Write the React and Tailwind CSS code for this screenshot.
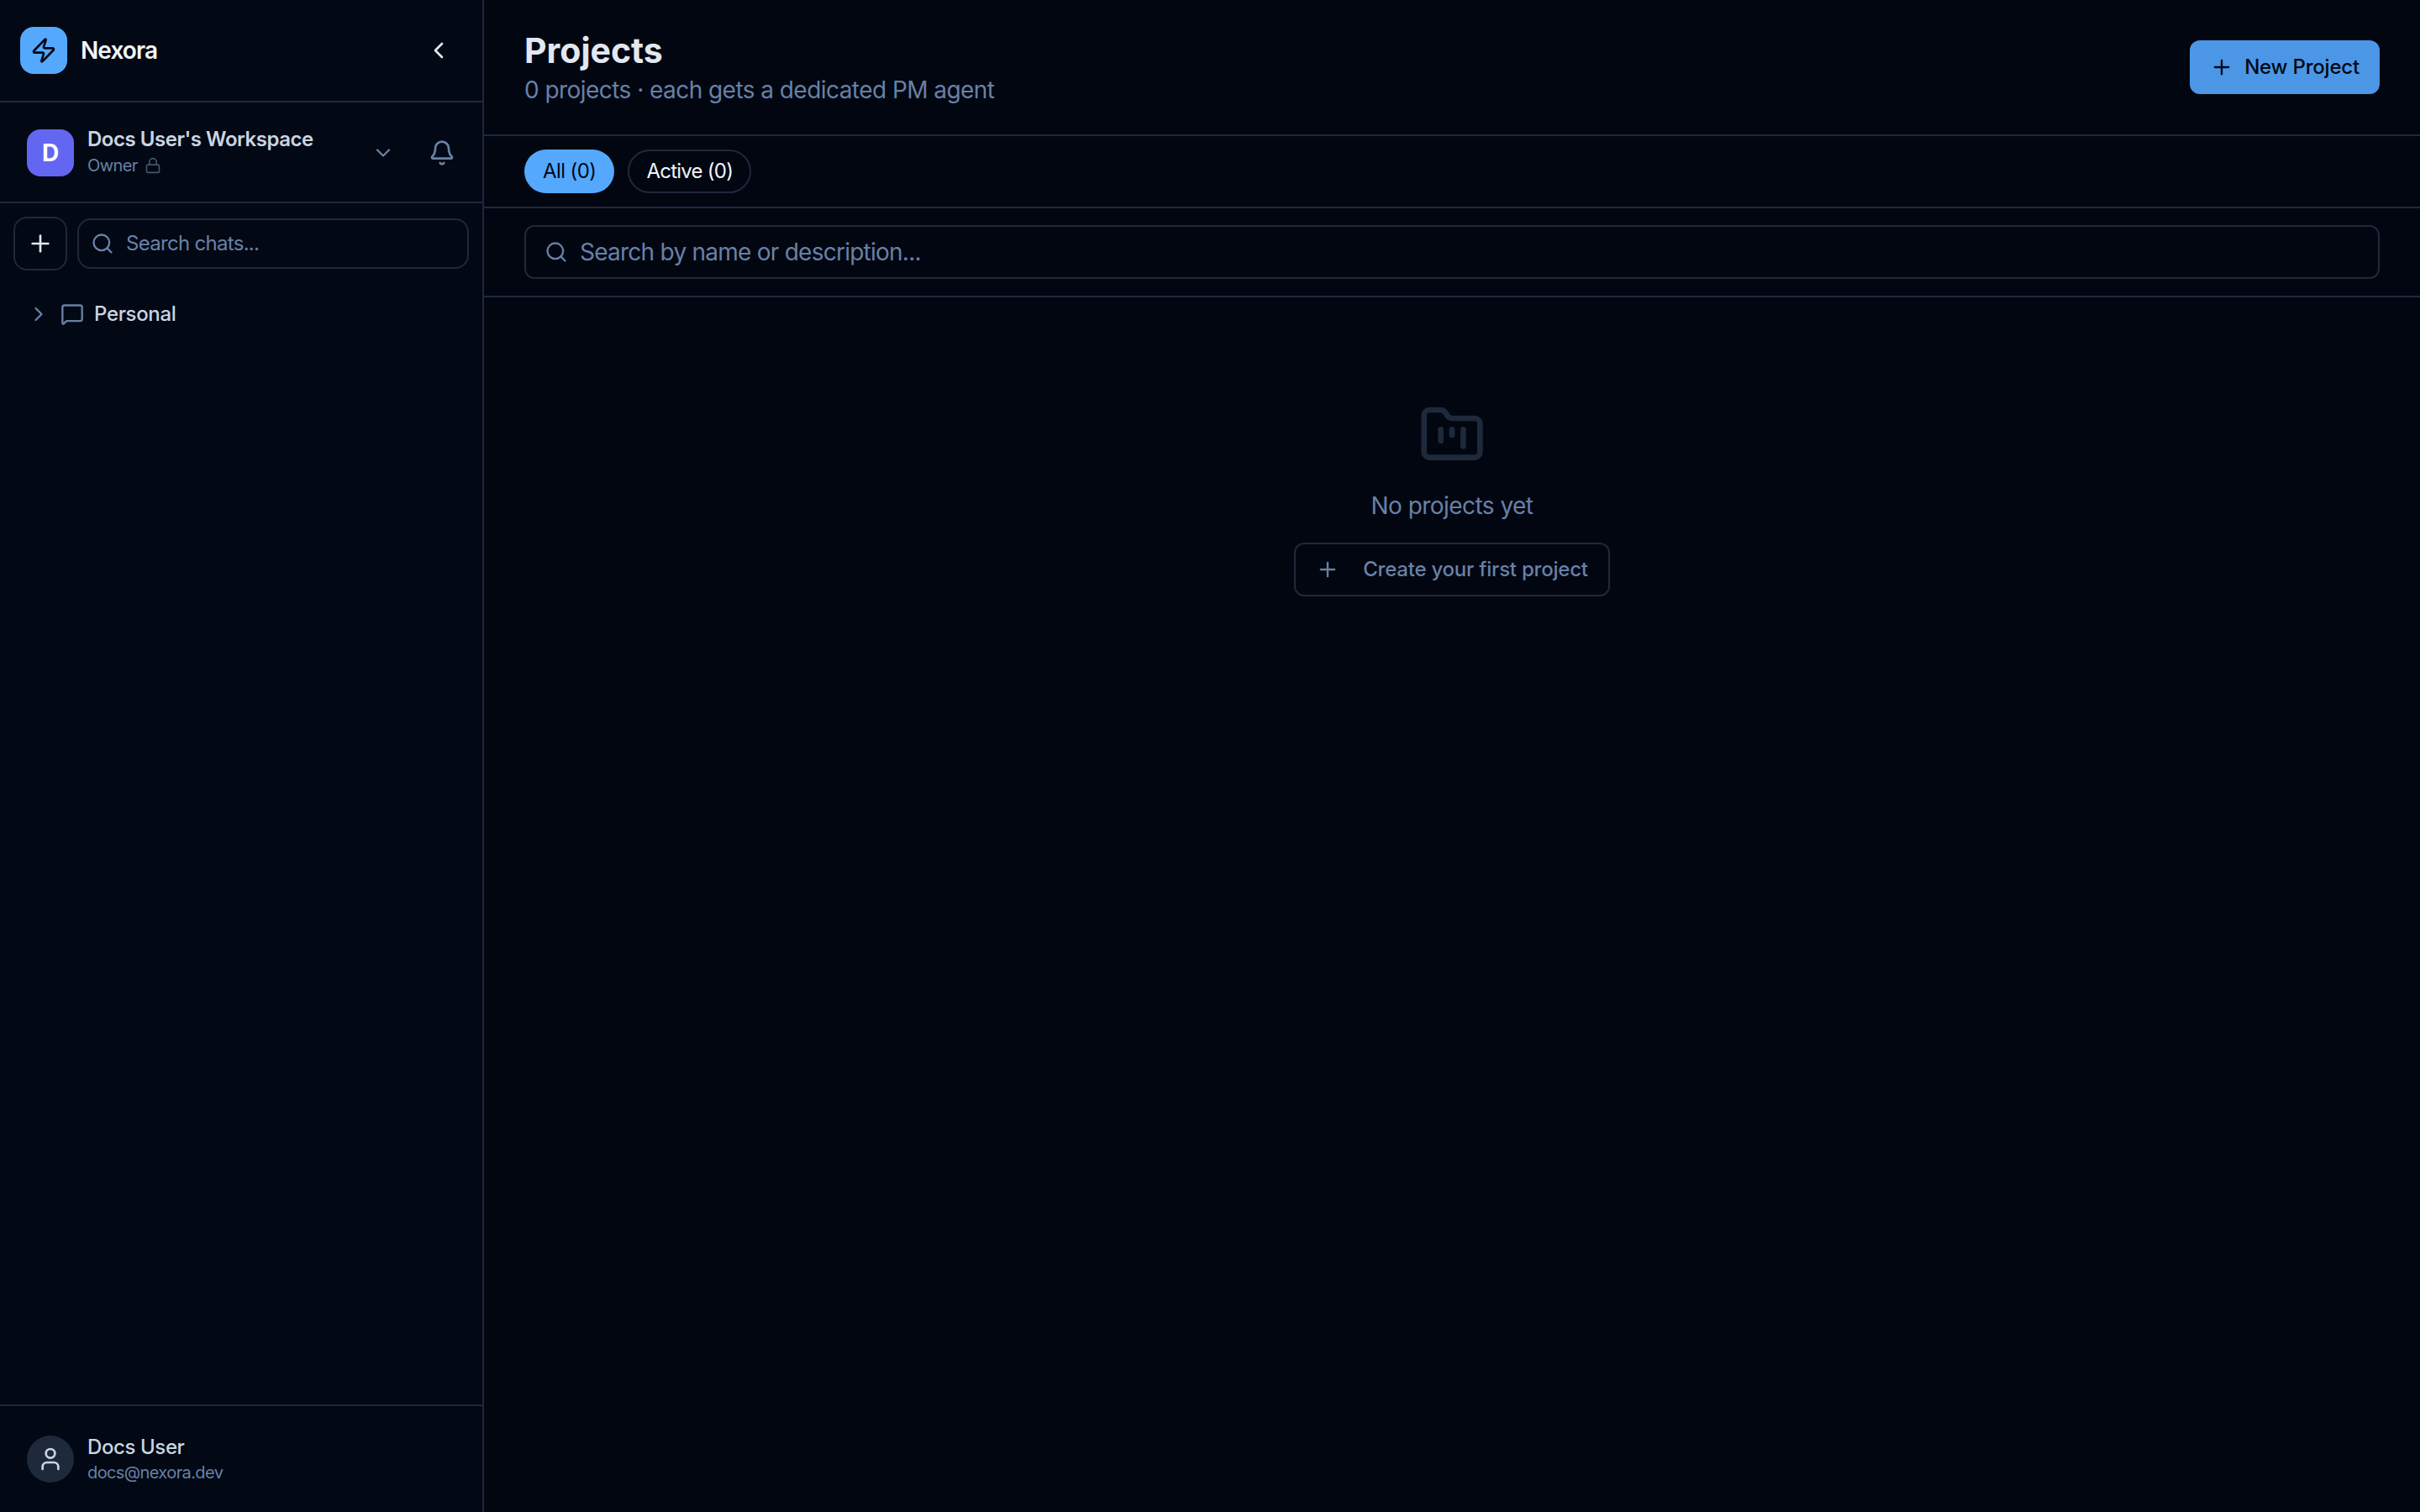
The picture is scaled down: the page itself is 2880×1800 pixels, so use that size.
import React from "react";
import { Zap, ChevronLeft, ChevronDown, ChevronRight, Bell, Lock, Plus, Search, MessageSquare, User, FolderKanban } from "lucide-react";

export default function App() {
  return (
    <div className="flex h-[1800px] w-[2880px] overflow-hidden bg-[#020611] font-['Inter',sans-serif]">
      <aside className="flex w-[576px] shrink-0 flex-col border-r-2 border-[#1e293b] bg-[#020814]">
        <div className="flex h-[122px] shrink-0 items-center justify-between border-b-2 border-[#1e293b] pr-[36px] pl-[24px]">
          <div className="flex items-center gap-[16px]">
            <div className="flex h-[56px] w-[56px] items-center justify-center rounded-[16px] bg-[#54a9ff]">
              <Zap size={32} strokeWidth={2} className="text-[#020817]" />
            </div>
            <span className="text-[28px] font-semibold tracking-[-0.9px] text-[#f1f5f9]">Nexora</span>
          </div>
          <ChevronLeft size={32} strokeWidth={2} className="text-[#e2e8f0]" />
        </div>

        <div className="flex h-[120px] shrink-0 items-center border-b-2 border-[#1e293b] pt-[2px] pr-[32px] pl-[32px]">
          <div className="flex h-[56px] w-[56px] shrink-0 items-center justify-center rounded-[16px] bg-[#6366f1] text-[28px] font-bold text-white">D</div>
          <div className="ml-[16px] flex min-w-0 flex-1 -translate-y-[1px] flex-col">
            <span className="text-[24px] leading-[32px] font-semibold tracking-[-0.46px] text-[#cbd5e1]">Docs User's Workspace</span>
            <div className="flex items-center gap-[8px]">
              <span className="text-[20px] leading-[30px] tracking-[-0.6px] text-[#6881a6]">Owner</span>
              <Lock size={20} strokeWidth={2} className="text-[#475569]" />
            </div>
          </div>
          <ChevronDown size={28} strokeWidth={2} className="mr-[40px] text-[#6881a6]" />
          <Bell size={32} strokeWidth={2} className="text-[#6881a6]" />
        </div>

        <div className="flex items-center gap-[12px] pt-[16px] pr-[16px] pl-[16px]">
          <button className="flex h-[64px] w-[64px] shrink-0 items-center justify-center rounded-[16px] border-2 border-[#1e293b] text-[#e2e8f0]">
            <Plus size={32} strokeWidth={2} />
          </button>
          <div className="flex h-[60px] flex-1 items-center gap-[14px] rounded-[16px] border-2 border-[#1e293b] pl-[14px]">
            <Search size={28} strokeWidth={2} className="text-[#6881a6]" />
            <span className="text-[24px] tracking-[-0.7px] text-[#6881a6]">Search chats...</span>
          </div>
        </div>

        <div className="mt-[36px] flex h-[32px] items-center pl-[32px]">
          <ChevronRight size={28} strokeWidth={2} className="text-[#6881a6]" />
          <MessageSquare size={28} strokeWidth={2} className="ml-[12px] text-[#6881a6]" />
          <span className="ml-[12px] text-[24px] font-medium tracking-[-0.35px] text-[#cbd5e1]">Personal</span>
        </div>

        <div className="mt-auto flex h-[128px] items-center gap-[16px] border-t-2 border-[#1e293b] pl-[32px]">
          <div className="flex h-[56px] w-[56px] items-center justify-center rounded-full bg-[#1e293b]">
            <User size={32} strokeWidth={2} className="text-[#cbd5e1]" />
          </div>
          <div className="flex flex-col">
            <span className="text-[24px] leading-[32px] font-medium tracking-[-0.4px] text-[#cbd5e1]">Docs User</span>
            <span className="text-[20px] leading-[28px] tracking-[-0.6px] text-[#6881a6]">docs@nexora.dev</span>
          </div>
        </div>
      </aside>

      <main className="flex min-w-0 flex-1 flex-col">
        <header className="flex h-[162px] shrink-0 items-center justify-between border-b-2 border-[#1e293b] pr-[48px] pl-[48px]">
          <div className="flex flex-col pt-[2px]">
            <h1 className="text-[41px] leading-[52px] font-bold text-[#e2e8f0]">Projects</h1>
            <p className="text-[28px] leading-[42px] tracking-[-0.55px] text-[#6881a6]">0 projects · each gets a dedicated PM agent</p>
          </div>
          <button className="flex h-[64px] items-center gap-[13px] rounded-[12px] bg-[#4b97e6] pr-[24px] pl-[24px] text-[24px] font-medium tracking-[-0.2px] text-[#020817]">
            <Plus size={28} strokeWidth={2} />
            New Project
          </button>
        </header>

        <div className="flex h-[86px] shrink-0 items-center gap-[16px] border-b-2 border-[#1e293b] pl-[48px]">
          <button className="flex h-[52px] items-center rounded-full bg-[#54a9ff] px-[22px] text-[24px] tracking-[-0.6px] text-[#020817]">All (0)</button>
          <button className="flex h-[52px] items-center rounded-full border-2 border-[#1e293b] px-[20px] text-[24px] tracking-[-0.75px] text-[#f1f5f9]">Active (0)</button>
        </div>

        <div className="flex h-[106px] shrink-0 items-center border-b-2 border-[#1e293b] px-[48px]">
          <div className="flex h-[64px] flex-1 items-center gap-[14px] rounded-[12px] border-2 border-[#1e293b] pl-[22px]">
            <Search size={28} strokeWidth={2} className="text-[#6881a6]" />
            <span className="text-[28px] tracking-[-0.75px] text-[#6881a6]">Search by name or description...</span>
          </div>
        </div>

        <div className="flex flex-col items-center pt-[124px]">
          <FolderKanban size={80} strokeWidth={2} className="text-[#1e293b]" />
          <p className="mt-[24px] text-[28px] leading-[40px] tracking-[-0.55px] text-[#6881a6]">No projects yet</p>
          <button className="mt-[24px] flex h-[64px] items-center gap-[28px] rounded-[12px] border-2 border-[#1e293b] px-[24px] text-[24px] font-medium tracking-[-0.22px] text-[#6881a6]">
            <Plus size={28} strokeWidth={2} />
            Create your first project
          </button>
        </div>
      </main>
    </div>
  );
}
